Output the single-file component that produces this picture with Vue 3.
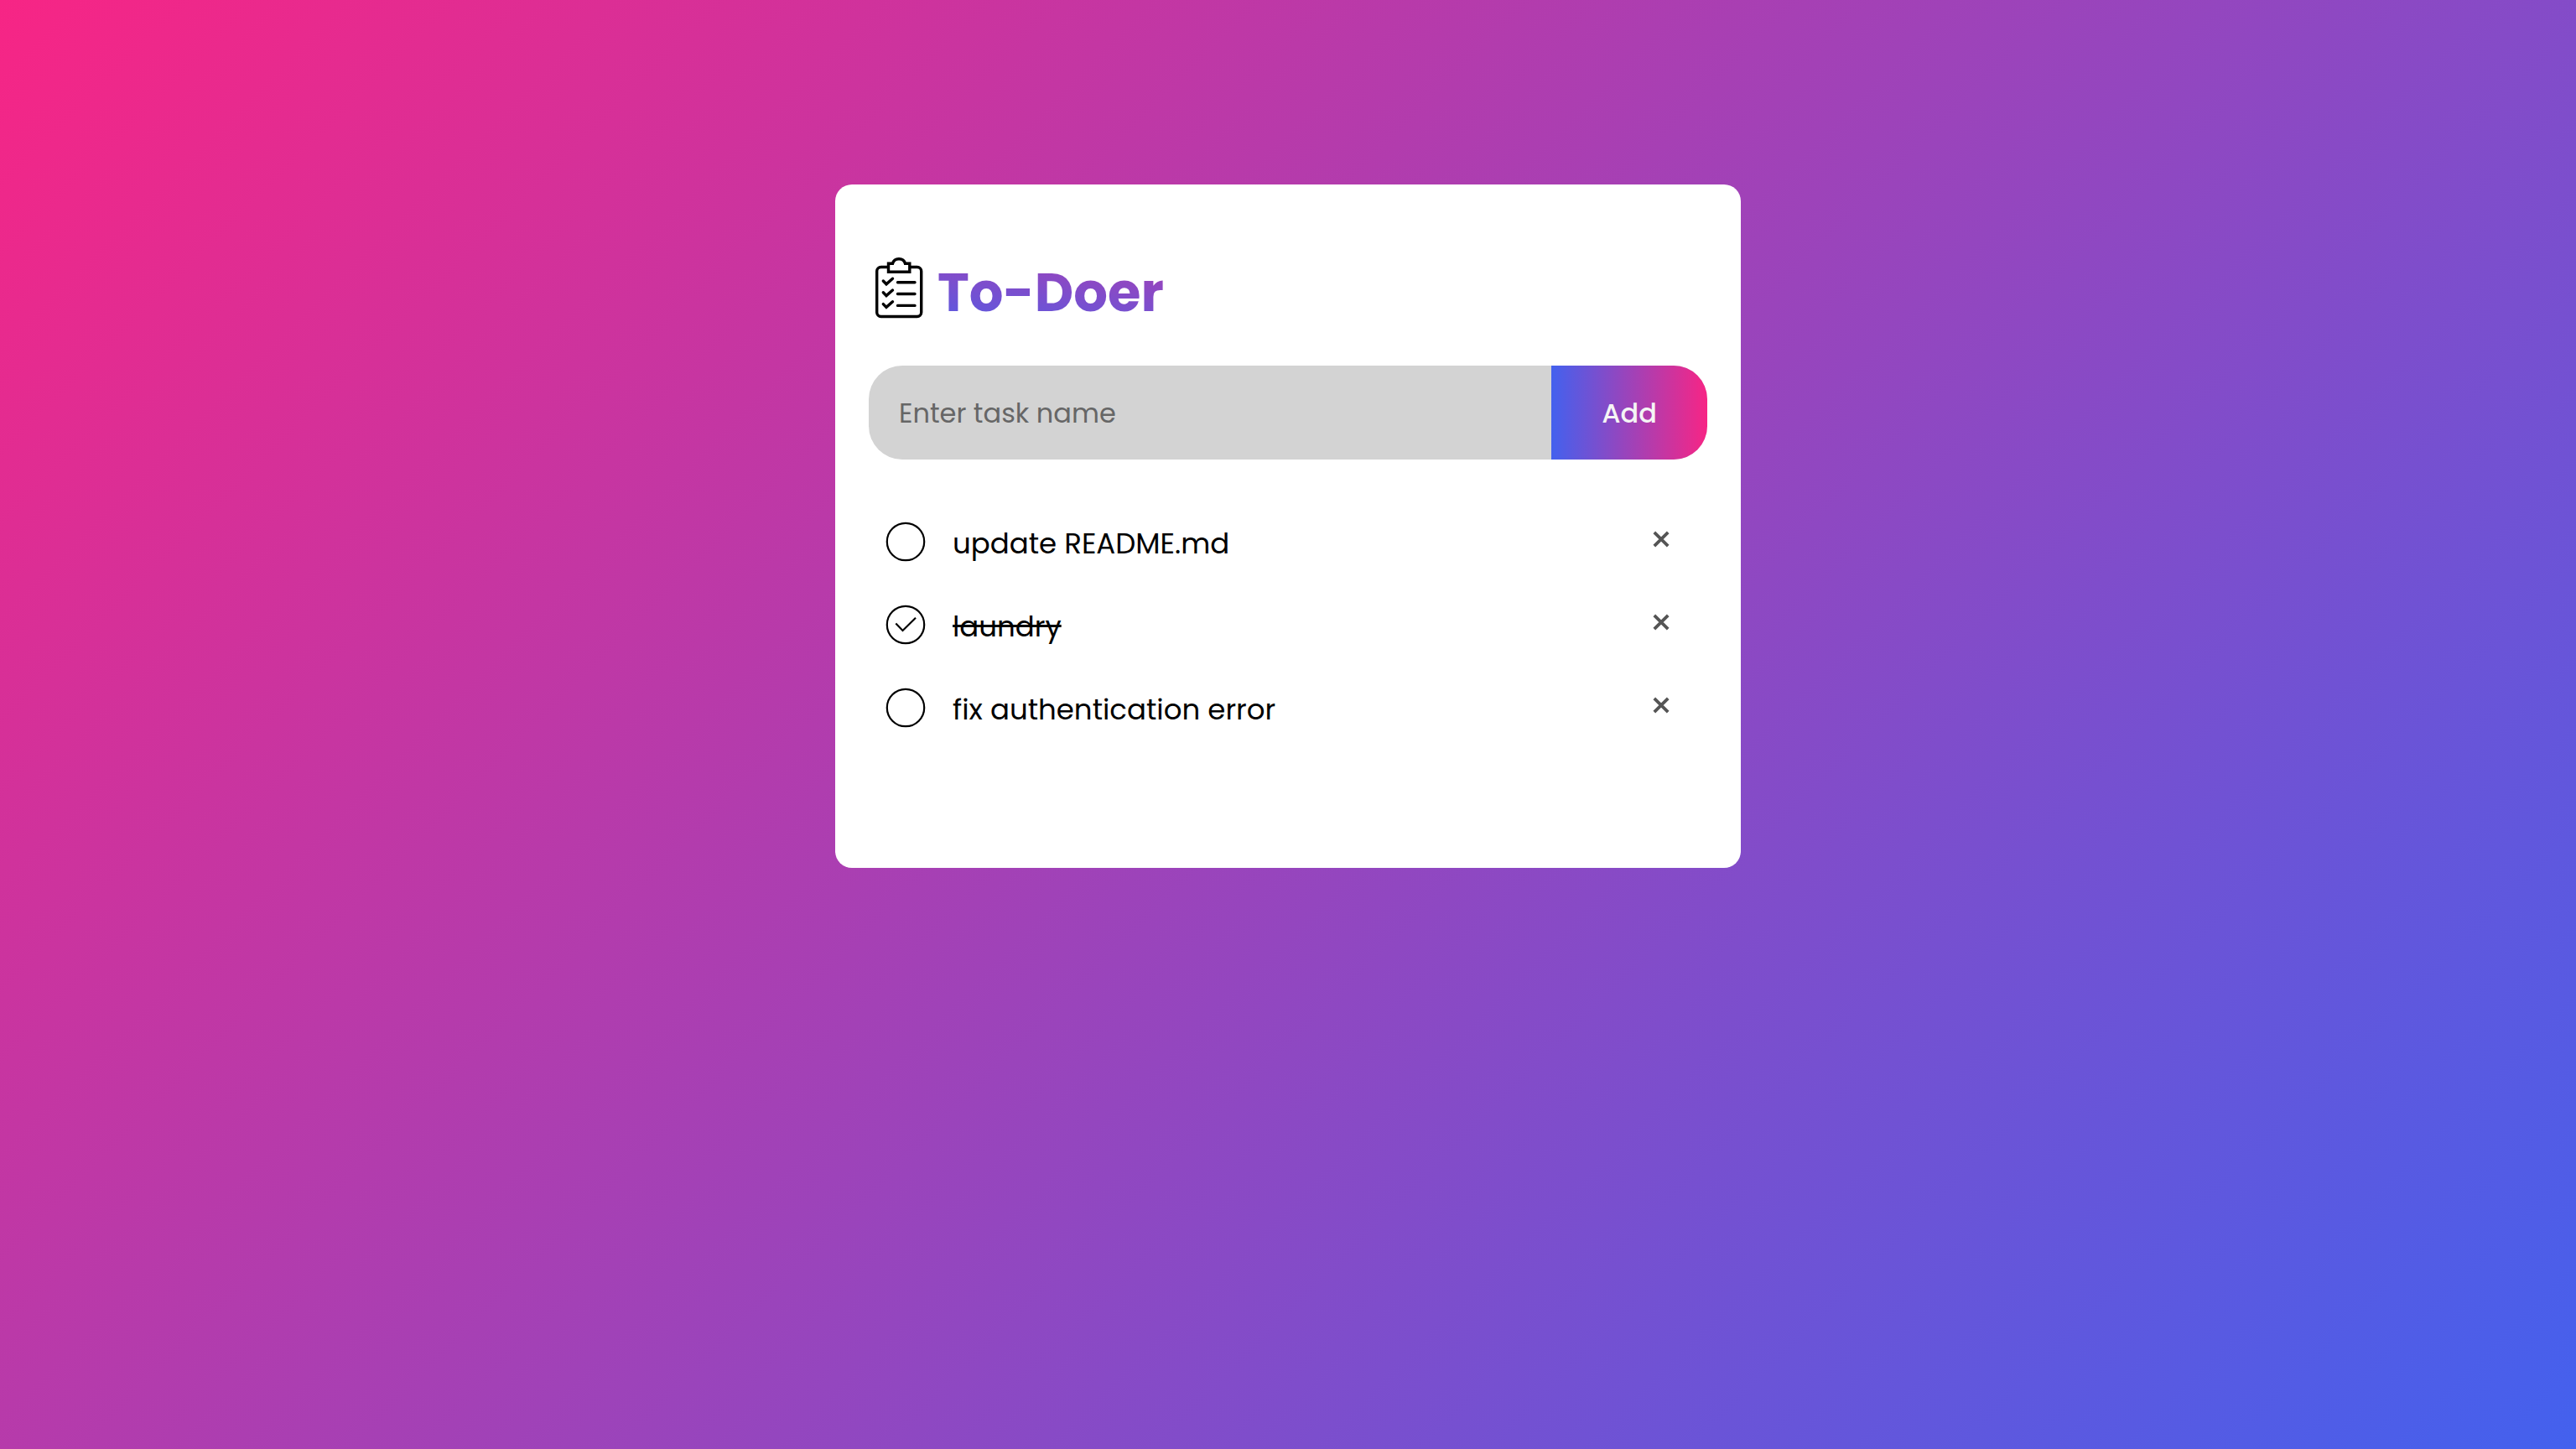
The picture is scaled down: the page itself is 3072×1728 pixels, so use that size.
<script setup>
import { ref } from 'vue'

const draft = ref('')
const tasks = ref([
  { id: 1, name: 'update README.md', done: false },
  { id: 2, name: 'laundry', done: true },
  { id: 3, name: 'fix authentication error', done: false },
])
let nextId = 4

function addTask() {
  const name = draft.value.trim()
  if (!name) return
  tasks.value.push({ id: nextId++, name, done: false })
  draft.value = ''
}

function removeTask(id) {
  tasks.value = tasks.value.filter((task) => task.id !== id)
}
</script>

<template>
  <main class="page">
    <section class="card">
      <header class="heading">
        <svg class="logo" viewBox="0 0 60 74" fill="none" stroke="#000" stroke-width="3.4" aria-hidden="true">
          <rect x="3.700" y="12.500" width="53" height="59" rx="5" />
          <path d="M17.500 8.300H22.500C24.500 0.800 35.500 0.800 37.500 8.300H42.800V18.300H17.500Z" fill="#fff" />
          <path
            d="M11.300 29L15 32.800L22.500 26.200M11.300 42.800L15 46.600L22.500 40M11.300 56.600L15 60.400L22.500 53.800"
            stroke-linecap="round"
          />
          <path d="M28.500 30.700H49M28.500 44.500H49M28.500 58.400H49" stroke-linecap="round" />
        </svg>
        <h1 class="title">To-Doer</h1>
      </header>

      <form class="entry" @submit.prevent="addTask">
        <input v-model="draft" class="field" type="text" placeholder="Enter task name" aria-label="Task name" />
        <button class="add" type="submit">Add</button>
      </form>

      <ul class="tasks">
        <li v-for="task in tasks" :key="task.id" class="task">
          <label class="label">
            <input v-model="task.done" class="check" type="checkbox" />
            <svg class="mark" viewBox="0 0 48 48" fill="none" stroke="#000" stroke-width="2.200" aria-hidden="true">
              <circle cx="24" cy="24" r="22.200" />
              <path v-if="task.done" d="M12.300 22.500L20.500 31L36 15.800" />
            </svg>
            <span class="name" :class="{ done: task.done }">{{ task.name }}</span>
          </label>
          <button class="remove" type="button" :aria-label="`Remove ${task.name}`" @click="removeTask(task.id)">
            <svg class="cross" viewBox="0 0 20 20" fill="none" stroke="#555" stroke-width="3.800" aria-hidden="true">
              <path d="M1.800 1.800L18.200 18.200M18.200 1.800L1.800 18.200" />
            </svg>
          </button>
        </li>
      </ul>
    </section>
  </main>
</template>

<style>
body {
  margin: 0;
}
</style>

<style scoped>
.page {
  box-sizing: border-box;
  min-height: 100vh;
  padding: 220px 40px 40px;
  background: linear-gradient(135deg, #f72585, #4361ee);
  font-family: Poppins, Inter, "Liberation Sans", sans-serif;
}

.card {
  box-sizing: border-box;
  width: 100%;
  max-width: 1080px;
  margin: 0 auto;
  padding: 60px 40px 142px;
  border-radius: 20px;
  background: #fff;
}

.heading {
  display: flex;
  align-items: flex-start;
  margin-bottom: 18px;
}

.logo {
  width: 60px;
  height: 74px;
  margin: 26px 16px 0 6px;
}

.title {
  flex: 1;
  margin: 0;
  padding: 20px 0;
  font-size: 64px;
  line-height: 98px;
  font-weight: 700;
  color: transparent;
  background: linear-gradient(to top right, #4361ee, #f72585);
  background-clip: text;
}

.entry {
  display: flex;
  height: 112px;
  margin-bottom: 48px;
  border-radius: 40px;
  overflow: hidden;
  background: #d3d3d3;
}

.field {
  flex: 1;
  min-width: 0;
  padding: 2px 36px 0;
  border: 0;
  outline: 0;
  background: transparent;
  font: inherit;
  font-size: 32px;
}

.field::placeholder {
  color: #666;
  opacity: 1;
}

.add {
  width: 186px;
  padding: 2px 0 0;
  border: 0;
  background: linear-gradient(to right, #4361ee, #f72585);
  color: #f5f5f5;
  font: inherit;
  font-size: 32px;
  font-weight: 500;
}

.tasks {
  margin: 0;
  padding: 0;
  list-style: none;
}

.task {
  display: flex;
  align-items: center;
  height: 99px;
  padding: 0 45px 0 20px;
}

.label {
  display: flex;
  flex: 1;
  align-items: center;
}

.check {
  position: absolute;
  opacity: 0;
}

.mark {
  width: 48px;
  height: 48px;
  margin-right: 32px;
}

.name {
  padding-top: 4px;
  font-size: 34px;
  line-height: 52px;
}

.done {
  text-decoration: line-through;
}

.remove {
  display: flex;
  padding: 0 0 6px;
  border: 0;
  background: none;
}

.cross {
  width: 20px;
  height: 20px;
}
</style>
